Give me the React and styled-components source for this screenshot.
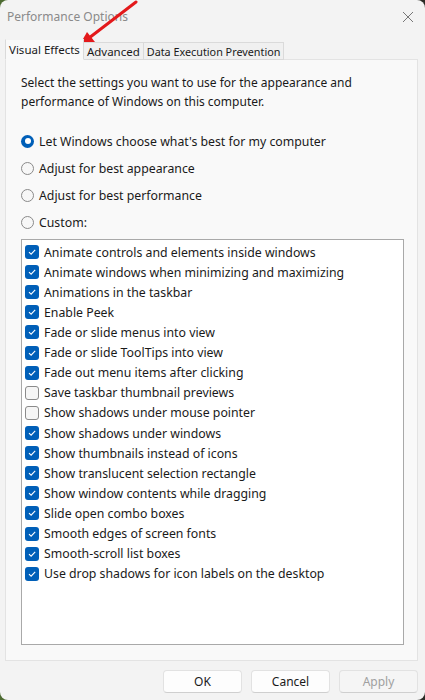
import React from 'react'
import styled, { createGlobalStyle } from 'styled-components'

const GlobalStyle = createGlobalStyle`
  html, body {
    margin: 0;
    padding: 0;
    background: linear-gradient(90deg, #4d6b32 0%, #3c4a2c 50%, #2b2b26 100%);
  }
  body {
    font-family: "Noto Sans", "Open Sans", sans-serif;
    color: #1a1a1a;
  }
`;

const Window = styled.div`
  position: relative;
  width: 425px;
  height: 700px;
  background: #f3f3f3;
  border-radius: 8px;
  overflow: hidden;
  display: flex;
  flex-direction: column;
  box-sizing: border-box;
`;

const TitleBar = styled.div`
  height: 33px;
  display: flex;
  align-items: center;
  justify-content: space-between;
  padding: 0 11px 0 7px;
  font-size: 12px;
  color: #8a8a8a;
`;

const CloseIcon = styled.svg`
  width: 12px;
  height: 12px;
`;

const Tabs = styled.div`
  display: flex;
  align-items: flex-end;
  margin: 6px 0 0 5px;
  height: 20px;
`;

const Tab = styled.div`
  font-size: ${p => (p.$narrow ? '10.8px' : '11.5px')};
  padding: 0 3px;
  height: ${p => (p.$active ? '21px' : '18px')};
  line-height: ${p => (p.$active ? '19px' : '17px')};
  box-sizing: border-box;
  background: ${p => (p.$active ? '#f9f9f9' : '#f0f0f0')};
  border: 1px solid #dadada;
  border-top-color: ${p => (p.$active ? '#f3f3f3' : '#dadada')};
  border-bottom: ${p => (p.$active ? '1px solid #f9f9f9' : '1px solid #dadada')};
  border-left: ${p => (p.$first || p.$active ? '1px solid #dadada' : 'none')};
  color: #1a1a1a;
  position: relative;
  z-index: ${p => (p.$active ? 2 : 1)};
  margin-bottom: -1px;
`;

const Panel = styled.div`
  margin: 0 7px 0 5px;
  height: 602px;
  box-sizing: border-box;
  background: #f9f9f9;
  border: 1px solid #e3e3e3;
  padding: 13px 13px 15px 15px;
  display: flex;
  flex-direction: column;
`;

const Description = styled.p`
  margin: 0;
  font-size: 12px;
  line-height: 19px;
  width: 370px;
`;

const RadioGroup = styled.div`
  display: flex;
  flex-direction: column;
  gap: 9px;
  margin-top: 21px;
`;

const RadioRow = styled.label`
  display: flex;
  align-items: center;
  gap: 5px;
  font-size: 12.3px;
  height: 18px;
`;

const RadioDot = styled.span`
  width: 13px;
  height: 13px;
  border-radius: 50%;
  box-sizing: border-box;
  flex: none;
  background: ${p => (p.$checked ? '#005fb8' : '#f7f7f7')};
  border: ${p => (p.$checked ? 'none' : '1px solid #8a8a8a')};
  display: flex;
  align-items: center;
  justify-content: center;
  &::after {
    content: '';
    display: ${p => (p.$checked ? 'block' : 'none')};
    width: 6px;
    height: 6px;
    border-radius: 50%;
    background: #fff;
  }
`;

const ListBox = styled.div`
  margin-top: 8px;
  height: 408px;
  box-sizing: border-box;
  background: #fff;
  border: 1px solid #a9a9a9;
  padding: 2px 0 0 3px;
  display: flex;
  flex-direction: column;
`;

const CheckRow = styled.div`
  display: flex;
  align-items: center;
  gap: 5px;
  height: 20.12px;
  font-size: 12.3px;
`;

const Box = styled.span`
  width: 14px;
  height: 14px;
  border-radius: 3px;
  box-sizing: border-box;
  flex: none;
  background: ${p => (p.$checked ? '#005fb8' : '#f5f5f5')};
  border: ${p => (p.$checked ? 'none' : '1px solid #8a8a8a')};
  display: flex;
  align-items: center;
  justify-content: center;
`;

const Footer = styled.div`
  display: flex;
  justify-content: flex-end;
  gap: 9px;
  padding: 9px 7px 0 0;
`;

const Button = styled.button`
  width: 79px;
  height: 23px;
  box-sizing: border-box;
  border: 1px solid #e2e2e2;
  border-bottom-color: #cfcfcf;
  border-radius: 4px;
  background: ${p => (p.$disabled ? '#f5f5f5' : '#fdfdfd')};
  color: ${p => (p.$disabled ? '#a0a0a0' : '#1a1a1a')};
  font-family: "Noto Sans", "Open Sans", sans-serif;
  font-size: 12px;
  padding: 0;
`;

const Arrow = styled.svg`
  position: absolute;
  left: 0;
  top: 0;
  width: 425px;
  height: 60px;
  pointer-events: none;
`;

const radios = [
  { label: "Let Windows choose what's best for my computer", checked: true },
  { label: 'Adjust for best appearance' },
  { label: 'Adjust for best performance' },
  { label: 'Custom:' },
]

const options = [
  ['Animate controls and elements inside windows', true],
  ['Animate windows when minimizing and maximizing', true],
  ['Animations in the taskbar', true],
  ['Enable Peek', true],
  ['Fade or slide menus into view', true],
  ['Fade or slide ToolTips into view', true],
  ['Fade out menu items after clicking', true],
  ['Save taskbar thumbnail previews', false],
  ['Show shadows under mouse pointer', false],
  ['Show shadows under windows', true],
  ['Show thumbnails instead of icons', true],
  ['Show translucent selection rectangle', true],
  ['Show window contents while dragging', true],
  ['Slide open combo boxes', true],
  ['Smooth edges of screen fonts', true],
  ['Smooth-scroll list boxes', true],
  ['Use drop shadows for icon labels on the desktop', true],
]

const Check = () => (
  <svg width="10" height="10" viewBox="0 0 10 10">
    <path d="M2 5.2 L4.1 7.2 L8.2 2.8" fill="none" stroke="#fff" strokeWidth="1.1" />
  </svg>
)

const App = () => {
  return (
    <>
      <GlobalStyle />
      <Window>
        <TitleBar>
          <span>Performance Options</span>
          <CloseIcon viewBox="0 0 12 12">
            <path d="M1 1 L11 11 M11 1 L1 11" stroke="#777" strokeWidth="1" />
          </CloseIcon>
        </TitleBar>
        <Tabs>
          <Tab $active $first>Visual Effects</Tab>
          <Tab>Advanced</Tab>
          <Tab $narrow>Data Execution Prevention</Tab>
        </Tabs>
        <Panel>
          <Description>
            Select the settings you want to use for the appearance and performance of Windows on this computer.
          </Description>
          <RadioGroup>
            {radios.map((r, i) => (
              <RadioRow key={i}>
                <RadioDot $checked={r.checked} />
                {r.label}
              </RadioRow>
            ))}
          </RadioGroup>
          <ListBox>
            {options.map(([label, on], i) => (
              <CheckRow key={i}>
                <Box $checked={on}>{on && <Check />}</Box>
                {label}
              </CheckRow>
            ))}
          </ListBox>
        </Panel>
        <Footer>
          <Button>OK</Button>
          <Button>Cancel</Button>
          <Button $disabled>Apply</Button>
        </Footer>
        <Arrow viewBox="0 0 425 60">
          <line x1="136" y1="2" x2="89" y2="38" stroke="#e3191b" strokeWidth="3" strokeLinecap="round" />
          <polygon points="79,46 87,32 95,42" fill="#e3191b" />
        </Arrow>
      </Window>
    </>
  )
}

export default App
